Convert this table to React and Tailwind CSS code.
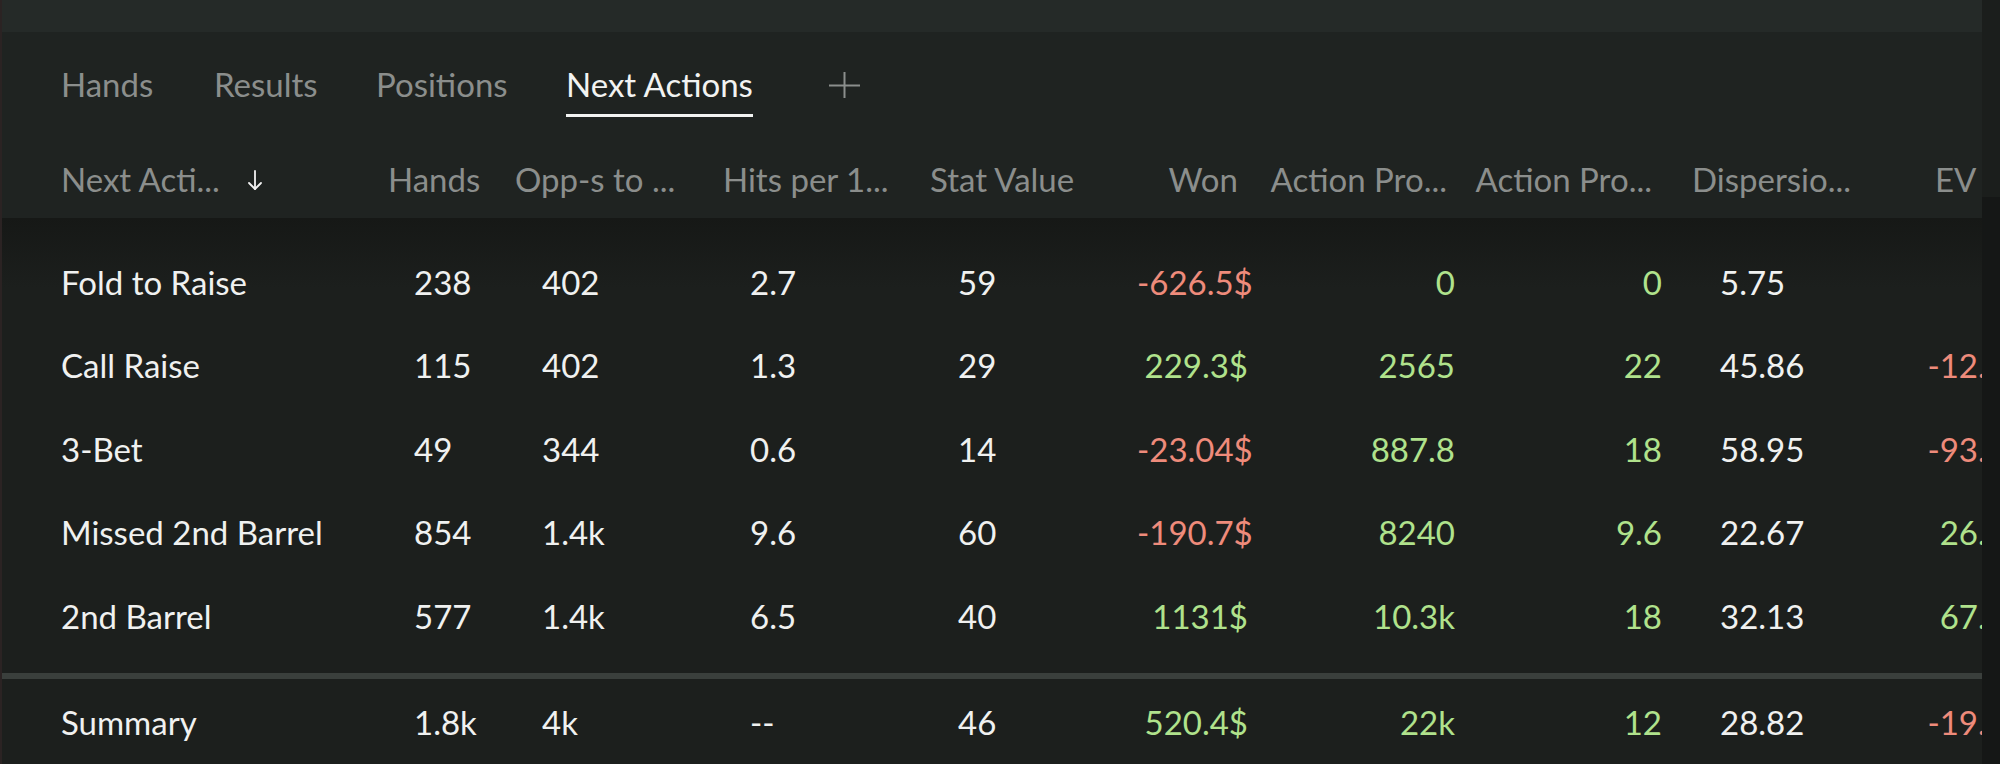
import React from "react";

const G = "text-[#b0e28c]";
const R = "text-[#ee8b7b]";
const W = "text-[#f0f1f0]";

const cols = [
  { key: "name", label: "Next Acti...", w: "w-[386px]", head: "pl-[59px]", cell: "pl-[59px] text-left" },
  { key: "hands", label: "Hands", w: "w-[127px]", head: "", cell: "pl-[26px] text-left" },
  { key: "opp", label: "Opp-s to ...", w: "w-[208px]", head: "", cell: "pl-[27px] text-left" },
  { key: "hits", label: "Hits per 1...", w: "w-[207px]", head: "", cell: "pl-[27px] text-left" },
  { key: "stat", label: "Stat Value", w: "w-[207px]", head: "", cell: "pl-[28px] text-left" },
  { key: "won", label: "Won", w: "w-[125px]", head: "pr-[24px] text-right", cell: "pr-[14px] text-right" },
  { key: "ap1", label: "Action Pro...", w: "w-[207px]", head: "pr-[22px] text-right", cell: "pr-[14px] text-right" },
  { key: "ap2", label: "Action Pro...", w: "w-[207px]", head: "pr-[24px] text-right", cell: "pr-[14px] text-right" },
  { key: "disp", label: "Dispersio...", w: "w-[207px]", head: "pl-[16px] text-left", cell: "pl-[44px] text-left" },
  { key: "ev", label: "EV adjusted", w: "w-[141px]", head: "pl-[52px] text-left", cell: "text-right" },
];

// [value, colour]
const rows = [
  {
    name: "Fold to Raise", hands: "238", opp: "402", hits: "2.7", stat: "59",
    won: ["-626.5$", R], ap1: ["0", G], ap2: ["0", G], disp: "5.75", ev: ["", W],
  },
  {
    name: "Call Raise", hands: "115", opp: "402", hits: "1.3", stat: "29",
    won: ["229.3$", G], ap1: ["2565", G], ap2: ["22", G], disp: "45.86", ev: ["-12.61", R],
  },
  {
    name: "3-Bet", hands: "49", opp: "344", hits: "0.6", stat: "14",
    won: ["-23.04$", R], ap1: ["887.8", G], ap2: ["18", G], disp: "58.95", ev: ["-93.45", R],
  },
  {
    name: "Missed 2nd Barrel", hands: "854", opp: "1.4k", hits: "9.6", stat: "60",
    won: ["-190.7$", R], ap1: ["8240", G], ap2: ["9.6", G], disp: "22.67", ev: ["26.71", G],
  },
  {
    name: "2nd Barrel", hands: "577", opp: "1.4k", hits: "6.5", stat: "40",
    won: ["1131$", G], ap1: ["10.3k", G], ap2: ["18", G], disp: "32.13", ev: ["67.12", G],
  },
];

const summary = {
  name: "Summary", hands: "1.8k", opp: "4k", hits: "--", stat: "46",
  won: ["520.4$", G], ap1: ["22k", G], ap2: ["12", G], disp: "28.82", ev: ["-19.28", R],
};

const tabs = [
  { label: "Hands", w: "w-[153px]" },
  { label: "Results", w: "w-[162px]" },
  { label: "Positions", w: "w-[190px]" },
  { label: "Next Actions", w: "w-[263px]", active: true },
];

function SortArrow() {
  return (
    <svg width="16" height="21" viewBox="0 0 16 21" fill="none" stroke="#f2f2f2" strokeWidth="1.8" strokeLinecap="round" strokeLinejoin="round" className="mt-[11px] -ml-[3px]">
      <path d="M8 1v18" />
      <path d="M2 13l6 6 6-6" />
    </svg>
  );
}

function PlusIcon() {
  return (
    <svg width="31" height="26" viewBox="0 0 31 26" fill="none" stroke="#8b8e8c" strokeWidth="2">
      <path d="M0 13.5h31" />
      <path d="M15.5 0v26" />
    </svg>
  );
}

function Row({ data, className }) {
  return (
    <div className={"flex items-center shrink-0 " + className}>
      {cols.map((c) => {
        const v = data[c.key];
        const [text, color] = Array.isArray(v) ? v : [v, W];
        return (
          <div key={c.key} className={`${c.w} shrink-0 whitespace-nowrap ${c.cell} ${color}`}>
            {text}
          </div>
        );
      })}
    </div>
  );
}

export default function App() {
  return (
    <div className="flex w-[2000px] h-[764px] overflow-hidden bg-[#1c1f1d] [font-family:Lato,'Noto_Sans',sans-serif] text-[33px] leading-[40px]">
      <div className="w-[2px] shrink-0 bg-[#2b2323]" />

      <div className="flex flex-col w-[1980px] shrink-0 overflow-hidden">
        <div className="h-[32px] shrink-0 bg-[#252a28]" />

        <div className="h-[186px] shrink-0 flex flex-col bg-[#1f2321]">
          <div className="flex mt-[32px] pl-[59px]">
            {tabs.map((t) => (
              <div key={t.label} className={`${t.w} shrink-0`}>
                <div className="inline-flex flex-col">
                  <span className={t.active ? "text-[#f2f3f2]" : "text-[#8b8e8c]"}>{t.label}</span>
                  <span className={`mt-[10px] h-[3px] ${t.active ? "bg-[#f2f3f2]" : "bg-transparent"}`} />
                </div>
              </div>
            ))}
            <div className="pt-[8px]">
              <PlusIcon />
            </div>
          </div>

          <div className="flex mt-[42px] h-[40px] text-[#8b8e8c] whitespace-nowrap">
            {cols.map((c) =>
              c.key === "name" ? (
                <div key={c.key} className={`${c.w} shrink-0 flex ${c.head}`}>
                  <span className="w-[189px]">{c.label}</span>
                  <SortArrow />
                </div>
              ) : (
                <div key={c.key} className={`${c.w} shrink-0 ${c.head}`}>
                  {c.label}
                </div>
              )
            )}
          </div>
        </div>

        <div className="flex-1 flex flex-col pt-[22px] bg-[linear-gradient(to_bottom,#161816,#1c1f1d_70px)]">
          {rows.map((r) => (
            <Row key={r.name} data={r} className="h-[83.5px]" />
          ))}
          <div className="mt-[15.5px] h-[6px] shrink-0 bg-[#3a3f3c]" />
          <Row data={summary} className="h-[86px]" />
        </div>
      </div>

      <div className="w-[18px] shrink-0 flex flex-col">
        <div className="h-[197px] bg-[#1b1e1c]" />
        <div className="flex-1 bg-[#151716]" />
      </div>
    </div>
  );
}
